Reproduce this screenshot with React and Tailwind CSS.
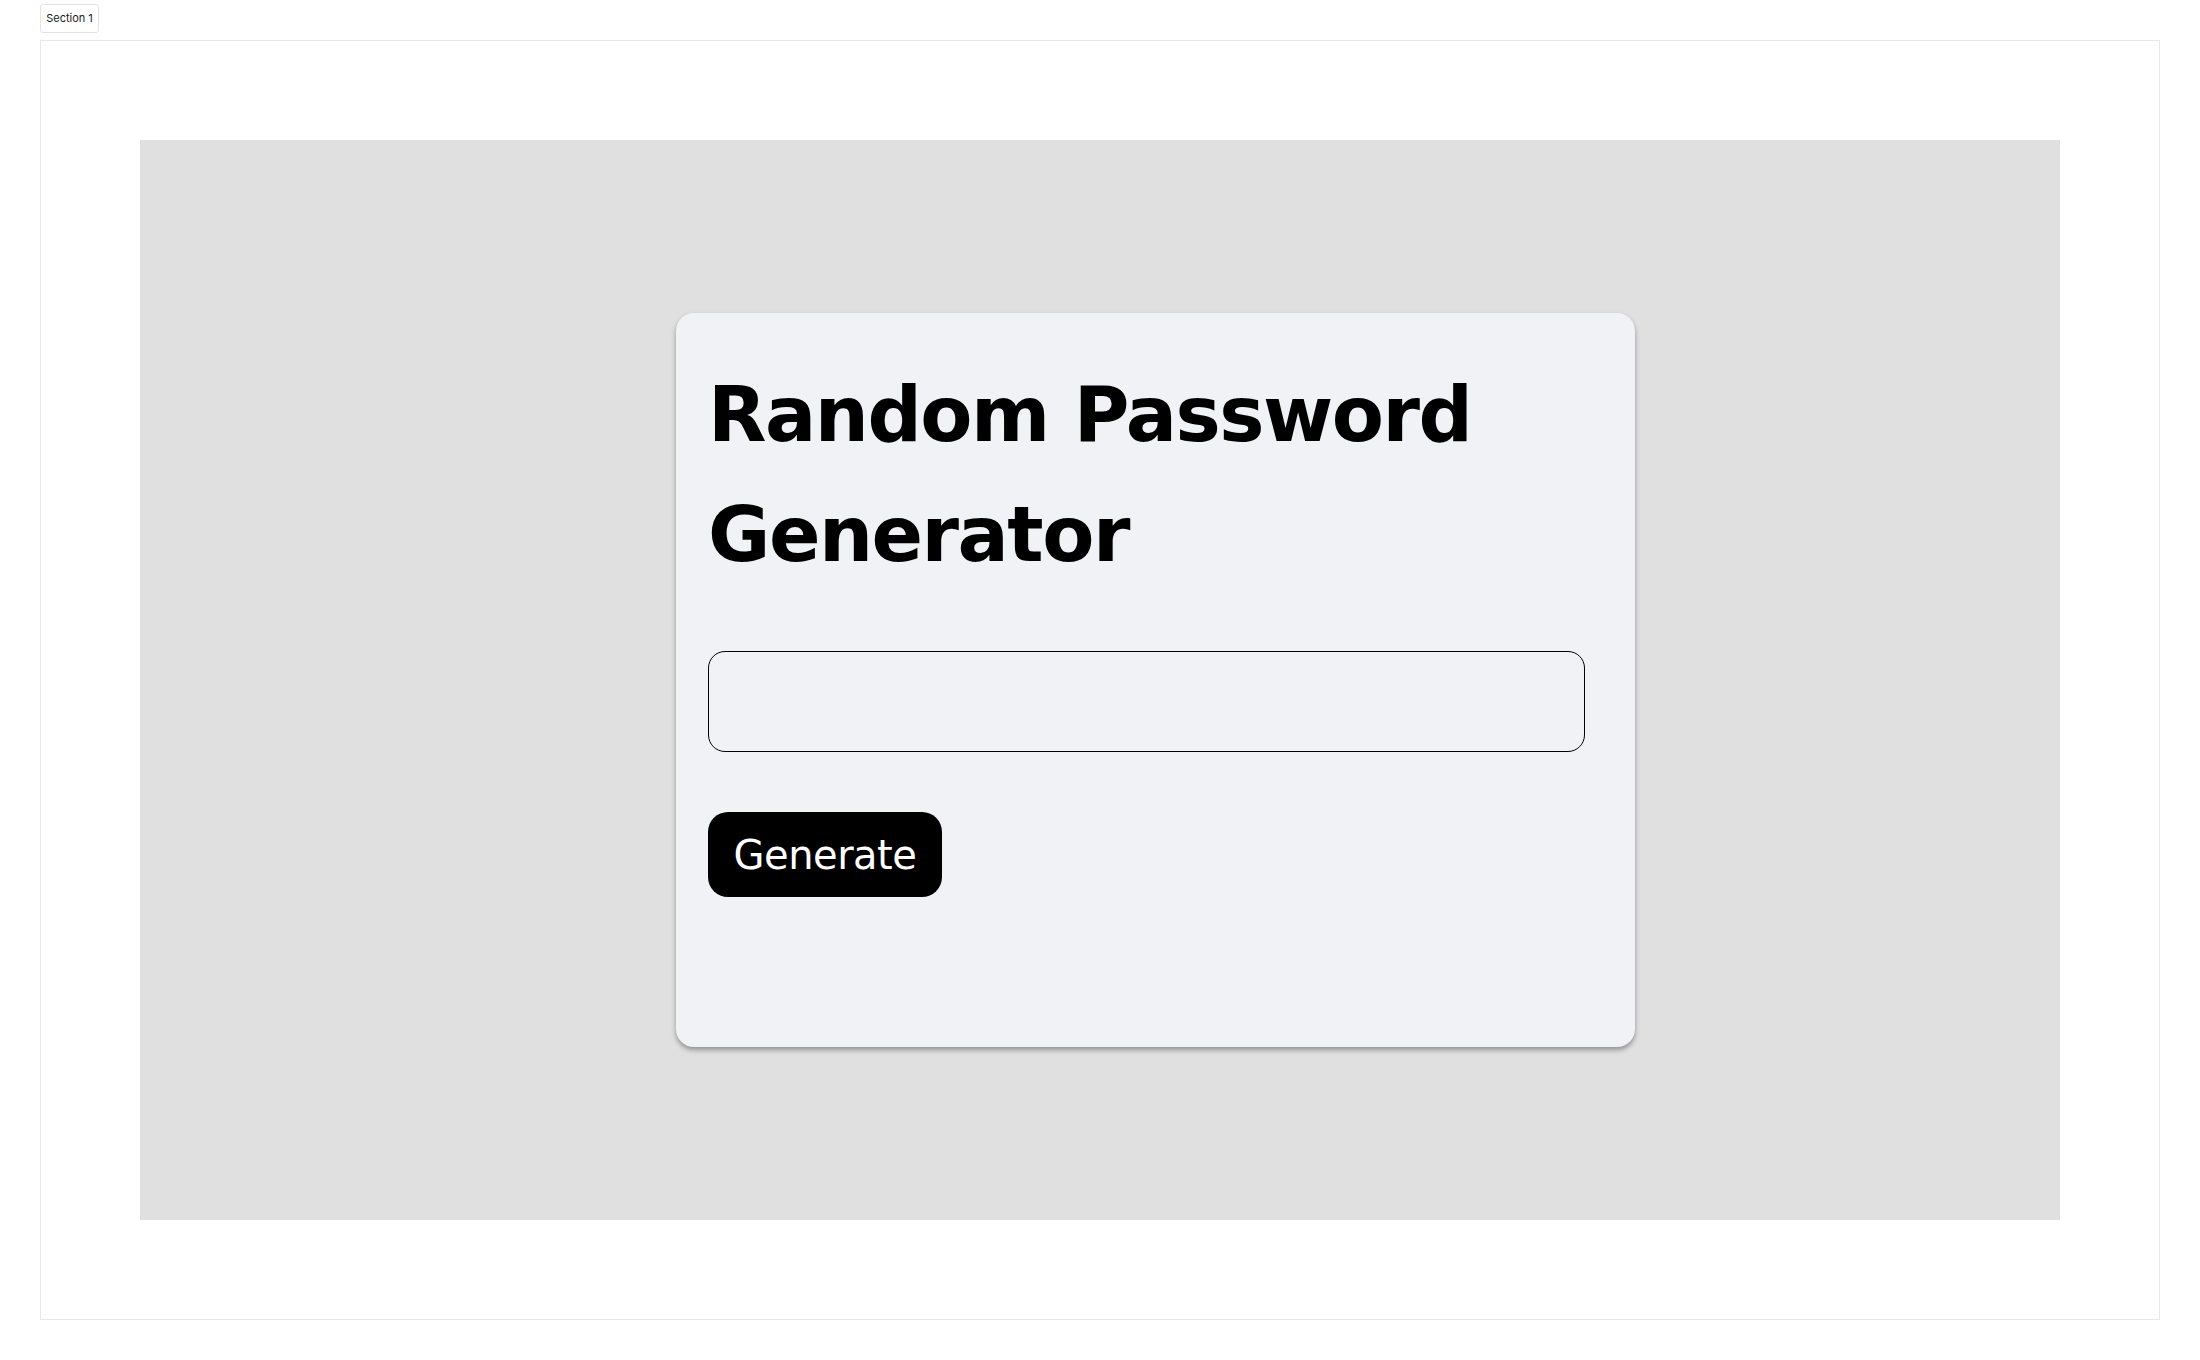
import { useState } from "react";

const CHARS =
  "ABCDEFGHIJKLMNOPQRSTUVWXYZabcdefghijklmnopqrstuvwxyz0123456789!@#$%^&*";

function makePassword(len = 16) {
  let out = "";
  for (let i = 0; i < len; i++) {
    out += CHARS[Math.floor(Math.random() * CHARS.length)];
  }
  return out;
}

export default function App() {
  const [password, setPassword] = useState("");

  return (
    <div className="min-h-[1360px] w-full bg-white font-['Inter','Liberation_Sans',sans-serif]">
      {/* section tag */}
      <div className="px-10 pt-1">
        <span className="inline-flex h-[29px] w-[59px] items-center justify-center rounded-[3px] border border-[#e3e3e3] text-[11px] text-[#1a1a1a]">
          Section 1
        </span>
      </div>

      {/* frame */}
      <div className="mx-10 mt-[7px] h-[1280px] w-[2120px] border border-[#e8e8e8] p-[99px]">
        <div className="flex h-[1080px] w-full items-center bg-[#e0e0e0]">
          <div className="ml-[536px] h-[734px] w-[959px] rounded-[18px] bg-[#f1f2f6] px-8 pt-[42px] shadow-[0_3px_5px_rgba(0,0,0,0.35)]">
            <h1 className="font-['DejaVu_Sans',sans-serif] text-[76px] font-bold leading-[120px] tracking-[-1.5px] text-black">
              Random Password
              <br />
              Generator
            </h1>

            <input
              readOnly
              value={password}
              className="mt-[56px] block h-[101px] w-[877px] rounded-[17px] border border-black bg-transparent px-6 text-[32px] text-black outline-none"
            />

            <button
              onClick={() => setPassword(makePassword())}
              className="mt-[60px] flex h-[85px] w-[234px] items-center justify-center rounded-[20px] bg-black font-['DejaVu_Sans',sans-serif] text-[40px] font-normal tracking-[-0.5px] text-white"
            >
              Generate
            </button>
          </div>
        </div>
      </div>
    </div>
  );
}
